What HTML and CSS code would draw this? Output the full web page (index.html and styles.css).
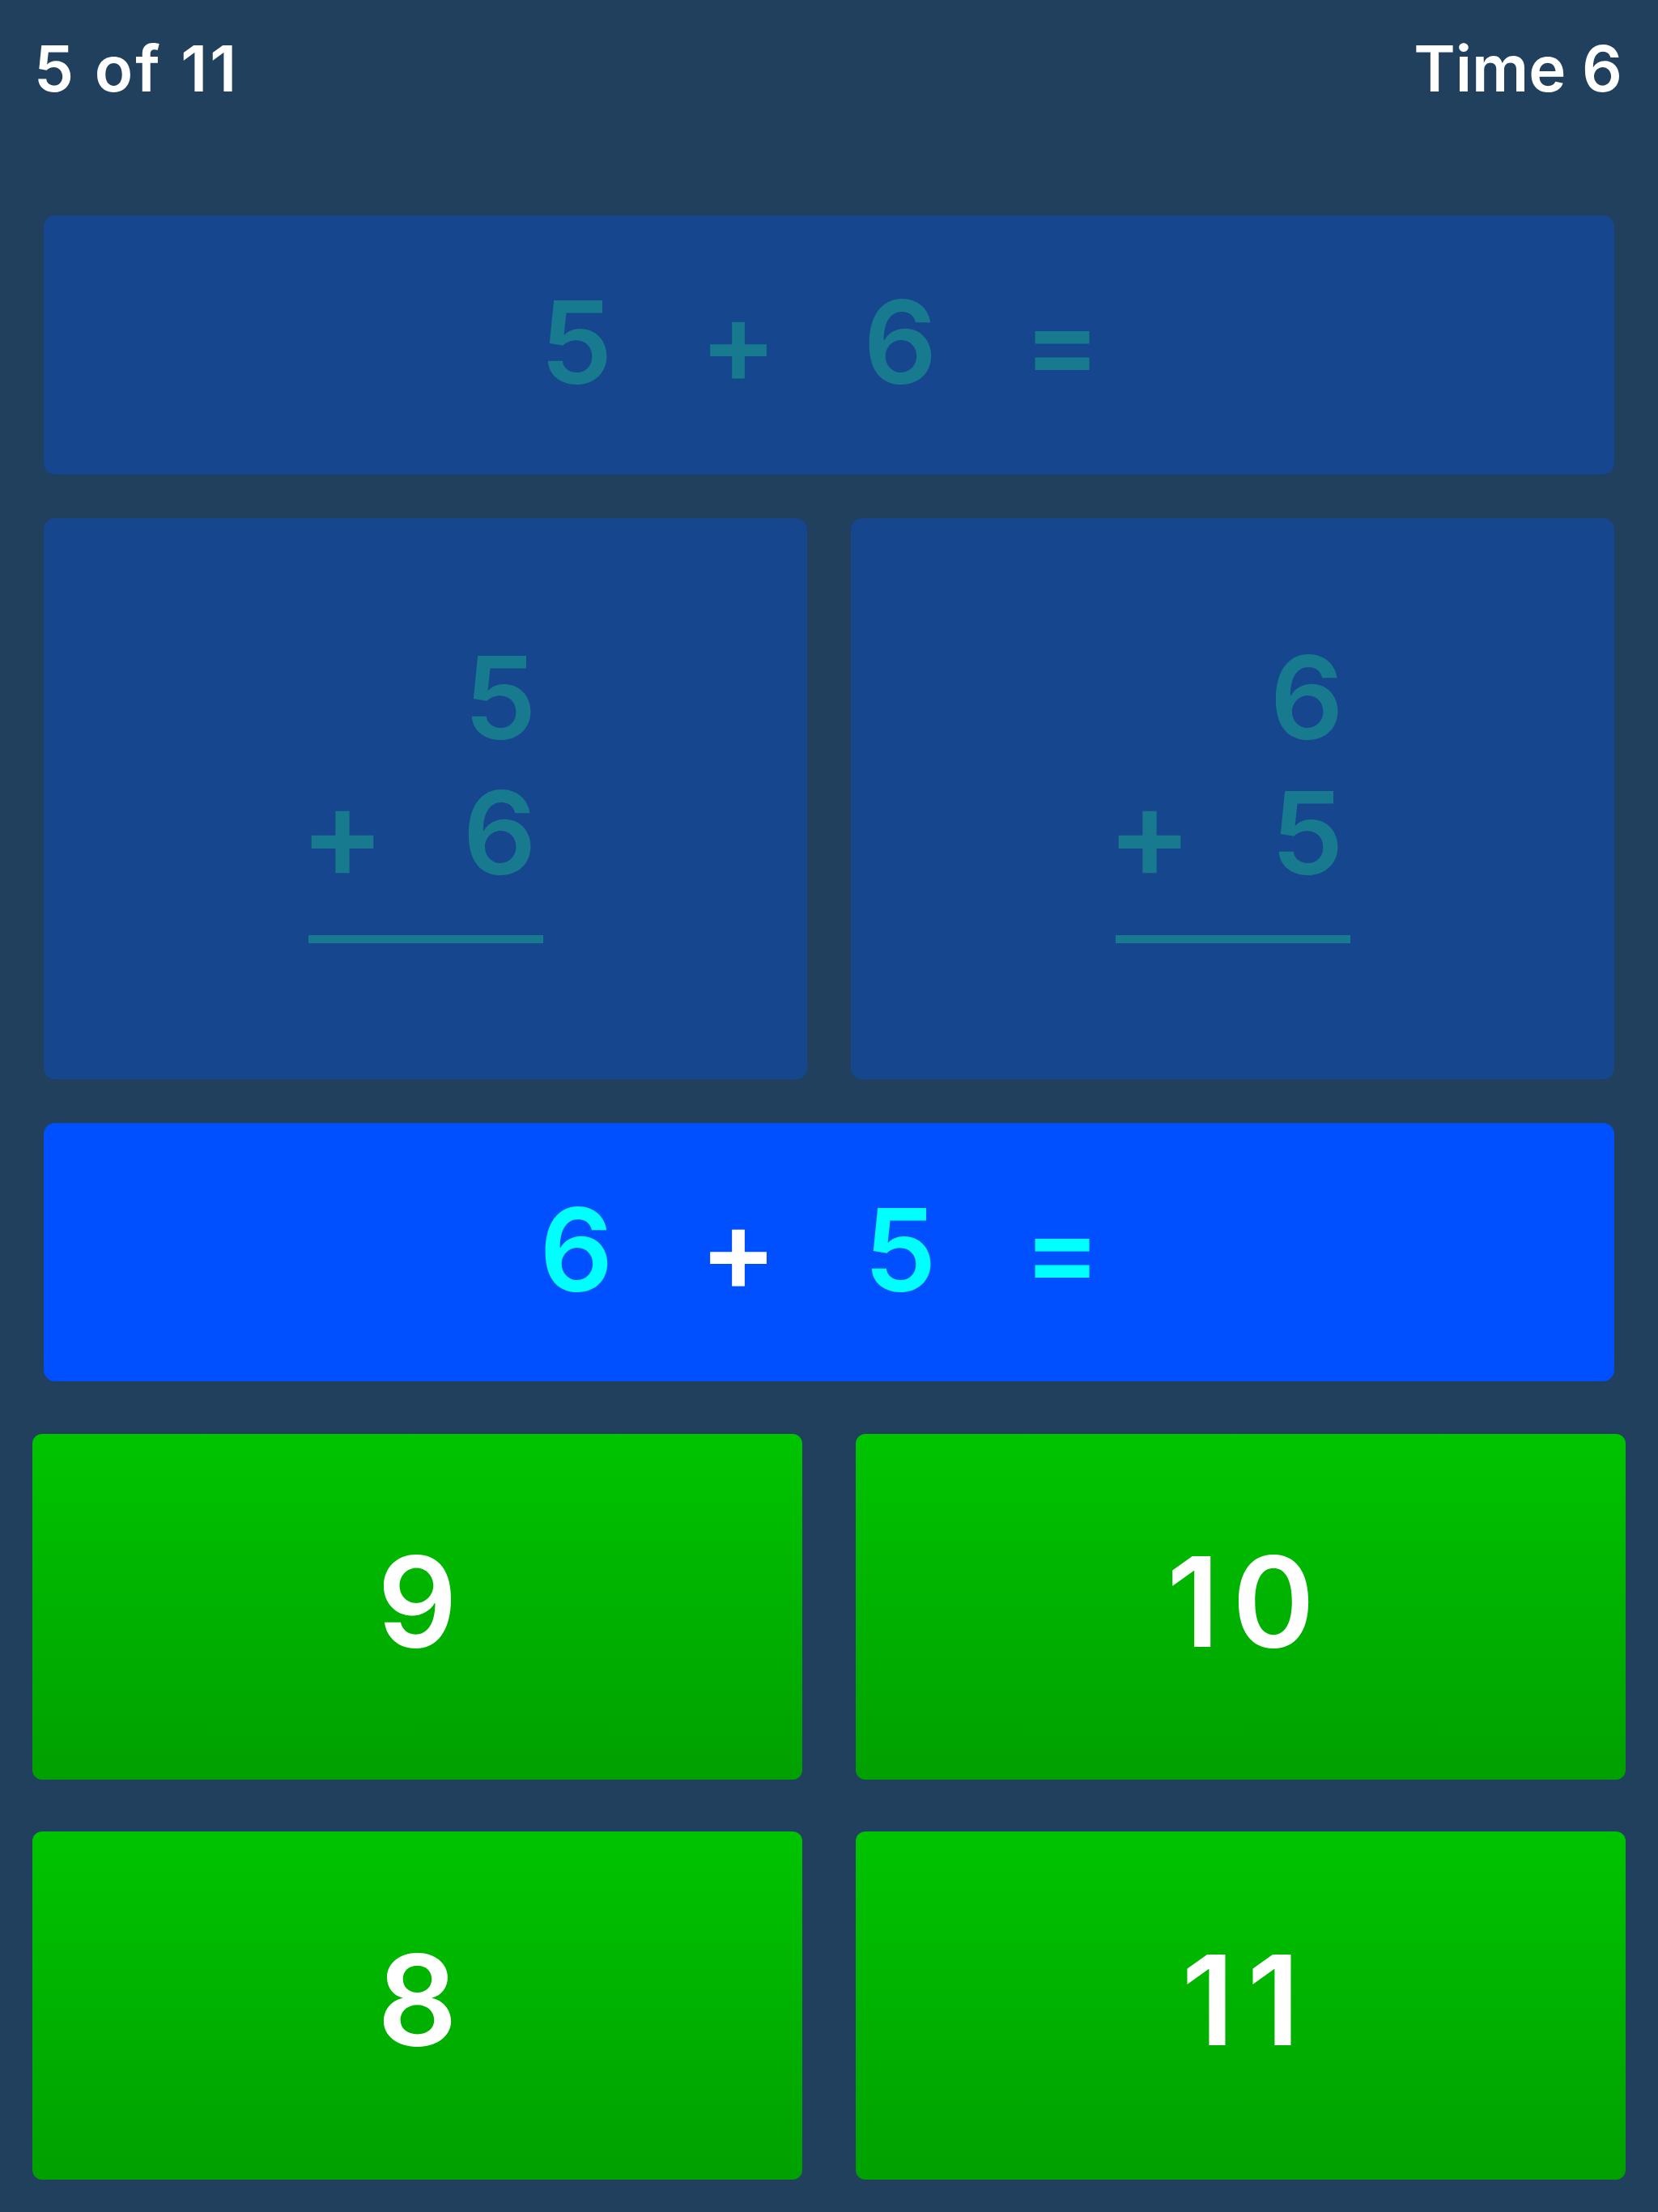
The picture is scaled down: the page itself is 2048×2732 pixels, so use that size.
FILE: index.html
```html
<!DOCTYPE html>
<html>
<head>
<meta name="viewport" content="width=device-width, initial-scale=1">
<title>Addition Drill</title>
<link rel="stylesheet" href="styles.css">
</head>
<body>

<div class="topbar">
  <span class="count">5 of 11</span>
  <span>Time 6</span>
</div>

<div class="board">

  <div class="card equation">
    <span class="tok">5</span>
    <span class="tok">+</span>
    <span class="tok">6</span>
    <span class="tok">=</span>
  </div>

  <div class="pair">
    <div class="card">
      <div class="stack">
        <div class="row"><span></span><span>5</span></div>
        <div class="row"><span class="op">+</span><span>6</span></div>
        <div class="bar"></div>
      </div>
    </div>
    <div class="card">
      <div class="stack">
        <div class="row"><span></span><span>6</span></div>
        <div class="row"><span class="op">+</span><span>5</span></div>
        <div class="bar"></div>
      </div>
    </div>
  </div>

  <div class="card equation prompt">
    <span class="tok num">6</span>
    <span class="tok">+</span>
    <span class="tok num">5</span>
    <span class="tok num">=</span>
  </div>

</div>

<div class="answers">
  <button class="answer">9</button>
  <button class="answer">10</button>
  <button class="answer">8</button>
  <button class="answer">11</button>
</div>

</body>
</html>
```

FILE: styles.css
```css
body {
  margin: 0;
  background-color: #20405e;
  font-family: Inter, "Open Sans", sans-serif;
}

/* counter and timer */
.topbar {
  display: flex;
  justify-content: space-between;
  padding: 46px 44px 0 42px;
  font-size: 78px;
  line-height: 78px;
  font-weight: 600;
  color: #fff;
}

.topbar .count {
  letter-spacing: 3px;
}

.board {
  padding: 142px 54px 0;
}

.card {
  background-color: #16468e;
  border-radius: 14px;
  color: #187a8f;
  font-size: 142px;
  font-weight: 600;
  line-height: 1;
  display: flex;
  align-items: center;
  justify-content: center;
}

.equation {
  height: 320px;
  padding-right: 24px;
  padding-bottom: 8px;
  box-sizing: border-box;
}

.equation .tok {
  width: 200px;
  text-align: center;
}

/* the two column sums */
.pair {
  display: grid;
  grid-template-columns: 1fr 1fr;
  gap: 54px;
  margin-top: 54px;
  height: 693px;
}

.stack {
  width: 290px;
  margin-bottom: 31px;
}

.stack .row {
  display: flex;
  justify-content: space-between;
  line-height: 167px;
  padding-right: 8px;
}

.stack .op {
  margin-left: -10px;
  font-size: 156px;
}

.stack .bar {
  height: 10px;
  margin-top: 43px;
  background-color: #187a8f;
}

.prompt {
  margin-top: 54px;
  height: 319px;
  background-color: #0050ff;
  color: #fff;
}

.prompt .num {
  color: #00ffff;
}

/* answer buttons */
.answers {
  display: grid;
  grid-template-columns: 1fr 1fr;
  grid-template-rows: 427px 430px;
  column-gap: 66px;
  row-gap: 64px;
  padding: 0 40px;
  margin-top: 65px;
}

.answer {
  border: none;
  border-radius: 12px;
  background: linear-gradient(#00c400, #00a000);
  color: #fff;
  font-family: Inter, "Open Sans", sans-serif;
  font-size: 154px;
  font-weight: 600;
  line-height: 1;
  letter-spacing: 16px;
  padding: 0 0 14px 16px;
  cursor: pointer;
}
```
